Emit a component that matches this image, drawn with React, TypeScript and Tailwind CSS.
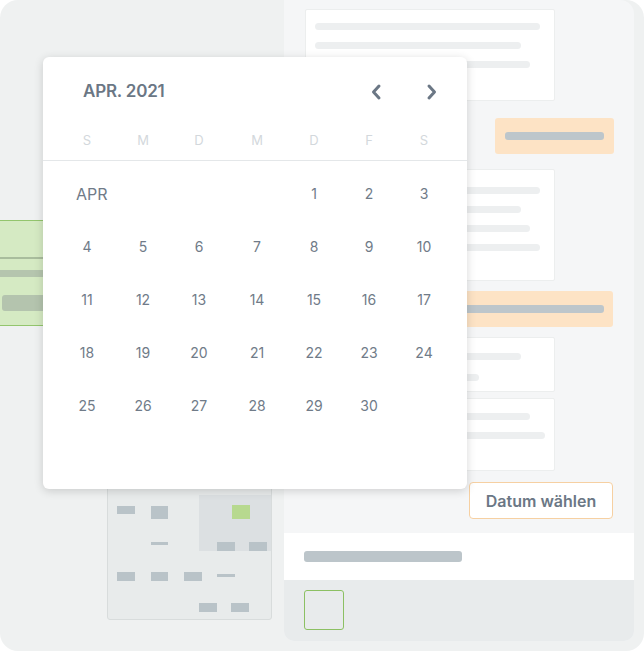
import React from "react";

const Line = ({ w }: { w: number }) => (
  <div className="h-[7px] rounded-full bg-[#edeff0]" style={{ width: w }} />
);

const Chevron = ({ dir }: { dir: "l" | "r" }) => (
  <svg width="24" height="24" viewBox="0 0 24 24" fill="none">
    {dir === "l" ? (
      <polyline points="15,6 9.5,12 15,18" stroke="#6b7785" strokeWidth="3" strokeLinecap="round" strokeLinejoin="round" />
    ) : (
      <polyline points="9,6 14.5,12 9,18" stroke="#6b7785" strokeWidth="3" strokeLinecap="round" strokeLinejoin="round" />
    )}
  </svg>
);

export default function App() {
  const weekdays = ["S", "M", "D", "M", "D", "F", "S"];
  const cells: (string | number | null)[] = ["APR", null, null, null];
  for (let d = 1; d <= 30; d++) cells.push(d);

  return (
    <div className="w-[644px] h-[651px] bg-white font-['Inter','Noto_Sans',sans-serif]">
      <div className="relative w-[644px] h-[651px] bg-[#eff1f1] rounded-[18px] overflow-hidden flex">
        {/* Left column */}
        <div className="w-[284px] shrink-0 flex flex-col pt-[220px]">
          <div className="w-[130px] h-[106px] bg-[#d5eac3] border-y border-[#93c56d] flex flex-col">
            <div className="mt-[36px] h-[2px] bg-[#a9bd9d]" />
            <div className="mt-[11px] h-[7px] bg-[#b5c5ae]" />
            <div className="mt-[18px] ml-[2px] h-[16px] bg-[#b4c4ae] rounded-[3px]" />
          </div>
          <div className="mt-[154px] ml-[107px] w-[165px] h-[140px] bg-[#e8ebeb] border border-[#d8dcdc] rounded-[3px] flex flex-col">
            <div className="mt-[14px] h-[56px] flex">
              <div className="w-[91px] flex">
                <div className="ml-[9px] pt-[11px]">
                  <div className="w-[18px] h-[8px] bg-[#b9c3c8]" />
                </div>
                <div className="ml-[16px] pt-[11px] flex flex-col">
                  <div className="w-[17px] h-[13px] bg-[#b9c3c8]" />
                  <div className="mt-[23px] w-[17px] h-[3px] bg-[#b9c3c8]" />
                </div>
              </div>
              <div className="flex-1 bg-[#dce0e2] flex flex-col">
                <div className="mt-[10px] ml-[33px] w-[18px] h-[14px] bg-[#b7d98f]" />
                <div className="mt-[23px] flex">
                  <div className="ml-[18px] w-[18px] h-[9px] bg-[#b9c3c8]" />
                  <div className="ml-[14px] w-[18px] h-[9px] bg-[#b9c3c8]" />
                </div>
              </div>
            </div>
            <div className="mt-[21px] flex items-start">
              <div className="ml-[9px] w-[18px] h-[9px] bg-[#b9c3c8]" />
              <div className="ml-[16px] w-[17px] h-[9px] bg-[#b9c3c8]" />
              <div className="ml-[16px] w-[18px] h-[9px] bg-[#b9c3c8]" />
              <div className="ml-[15px] mt-[2px] w-[18px] h-[3px] bg-[#b9c3c8]" />
            </div>
            <div className="mt-[22px] flex">
              <div className="ml-[91px] w-[18px] h-[9px] bg-[#b9c3c8]" />
              <div className="ml-[14px] w-[18px] h-[9px] bg-[#b9c3c8]" />
            </div>
          </div>
        </div>

        {/* Right panel */}
        <div className="w-[350px] h-[641px] shrink-0 bg-[#f5f6f7] rounded-tr-[14px] rounded-b-[10px] overflow-hidden flex flex-col pt-[9px]">
          <div className="ml-[21px] w-[250px] h-[92px] bg-white border border-[#eceeee] rounded-[2px] pt-[13px] pl-[9px] flex flex-col gap-[12px]">
            <Line w={225} />
            <Line w={206} />
            <Line w={215} />
          </div>
          <div className="mt-[17px] ml-[211px] w-[119px] h-[36px] bg-[#fde3c5] rounded-[3px] flex items-center px-[10px]">
            <div className="h-[8px] w-full bg-[#bdc6cb] rounded-[3px]" />
          </div>
          <div className="mt-[15px] ml-[21px] w-[250px] h-[112px] bg-white border border-[#eceeee] rounded-[2px] pt-[17px] pl-[9px] flex flex-col gap-[12px]">
            <Line w={225} />
            <Line w={206} />
            <Line w={215} />
            <Line w={225} />
          </div>
          <div className="mt-[10px] ml-[21px] w-[308px] h-[36px] bg-[#fde3c5] rounded-[3px] flex items-center pl-[10px] pr-[9px]">
            <div className="h-[8px] w-full bg-[#bdc6cb] rounded-[3px]" />
          </div>
          <div className="mt-[10px] ml-[21px] w-[250px] h-[55px] bg-white border border-[#eceeee] rounded-[2px] pt-[15px] pl-[9px] flex flex-col gap-[14px]">
            <Line w={206} />
            <Line w={164} />
          </div>
          <div className="mt-[6px] ml-[21px] w-[250px] h-[73px] bg-white border border-[#eceeee] rounded-[2px] pt-[14px] pl-[9px] flex flex-col gap-[12px]">
            <Line w={215} />
            <Line w={230} />
          </div>
          <div className="mt-[11px] ml-[185px] w-[144px] h-[37px] bg-white border border-[#f6d0a2] rounded-[4px] flex items-center justify-center text-[16px] font-semibold text-[#6b7785]">
            Datum wählen
          </div>
          <div className="mt-[14px] h-[47px] bg-white flex items-center pl-[20px]">
            <div className="w-[158px] h-[11px] bg-[#bcc5ca] rounded-[3px]" />
          </div>
          <div className="h-[61px] bg-[#e8ebec] pt-[10px] pl-[20px]">
            <div className="w-[40px] h-[40px] border border-[#8cc063] rounded-[3px]" />
          </div>
        </div>

        {/* Calendar popup */}
        <div className="absolute left-[43px] top-[57px] w-[424px] h-[432px] bg-white rounded-[6px] shadow-[0_2px_10px_rgba(0,0,0,0.16)] flex flex-col">
          <div className="h-[70px] flex items-center pl-[40px] pr-[23px]">
            <div className="text-[17px] font-semibold text-[#6b7785] tracking-[-0.2px]">APR. 2021</div>
            <div className="ml-auto flex items-center gap-[32px]">
              <Chevron dir="l" />
              <Chevron dir="r" />
            </div>
          </div>
          <div className="h-[34px] pt-[5px] px-4 grid grid-cols-[56px_56px_56px_60px_54px_56px_54px] border-b border-[#e4e7e9]">
            {weekdays.map((w, i) => (
              <div key={i} className="text-center text-[13px] leading-[16px] text-[#d3d8dc]">
                {w}
              </div>
            ))}
          </div>
          <div className="pt-[6px] px-4 grid grid-cols-[56px_56px_56px_60px_54px_56px_54px]">
            {cells.map((c, i) =>
              c === "APR" ? (
                <div key={i} className="h-[53px] flex items-center pl-[17px] text-[16px] text-[#707b88]">
                  APR
                </div>
              ) : (
                <div key={i} className="h-[53px] flex items-center justify-center text-[14px] text-[#707b88]">
                  {c ?? ""}
                </div>
              )
            )}
          </div>
        </div>
      </div>
    </div>
  );
}
